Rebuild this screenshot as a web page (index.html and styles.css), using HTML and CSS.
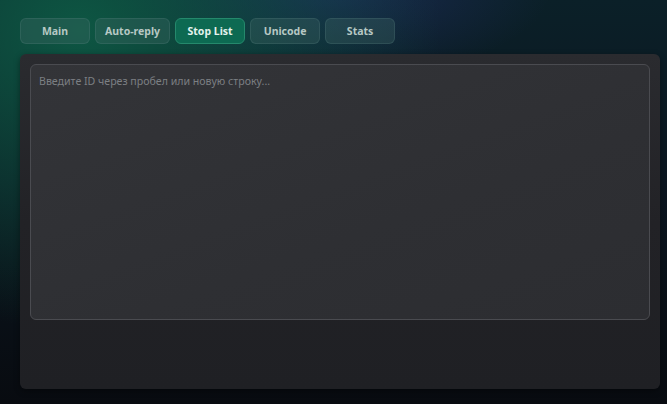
FILE: index.html
```html
<!doctype html>
<html lang="ru">
<head>
	<meta charset="UTF-8">
	<title>Stop List</title>
	<link rel="stylesheet" href="styles.css">
</head>
<body>
	<div class="app">
		<div class="tabs">
			<a href="javascript:;" class="tab">Main</a>
			<a href="javascript:;" class="tab">Auto-reply</a>
			<a href="javascript:;" class="tab active">Stop List</a>
			<a href="javascript:;" class="tab">Unicode</a>
			<a href="javascript:;" class="tab">Stats</a>
		</div>
		<div class="panel">
			<textarea class="ids" placeholder="Введите ID через пробел или новую строку..."></textarea>
		</div>
	</div>
</body>
</html>
```

FILE: styles.css
```css
html, body {
	height: 100%;
}
body {
	margin: 0;
	padding: 0;
	font: 10.5px/1.4 "Noto Sans", "Open Sans", sans-serif;
	color: #c9d4d1;
	background:
		radial-gradient(ellipse 360px 300px at 80px 30px, rgba(14, 96, 72, .85), transparent),
		radial-gradient(ellipse 220px 90px at 330px -10px, rgba(40, 50, 120, .5), transparent),
		linear-gradient(180deg, #0b2028 0%, #0b1620 45%, #080b10 100%);
	overflow: hidden;
}
.app {
	padding: 18px 8px 0 20px;
}
/* 顶部标签 */
.tabs {
	display: flex;
	gap: 5px;
}
.tab {
	display: inline-block;
	box-sizing: border-box;
	min-width: 70px;
	height: 26px;
	line-height: 24px;
	padding: 0 9px;
	text-align: center;
	font-weight: 700;
	color: #b7c8c4;
	text-decoration: none;
	background: rgba(70, 110, 105, .3);
	border: 1px solid rgba(100, 140, 135, .22);
	border-radius: 6px;
}
.tab.active {
	color: #e4f3ed;
	background: #0d6a52;
	border-color: #25896c;
}
/* 面板 */
.panel {
	margin-top: 10px;
	box-sizing: border-box;
	width: 640px;
	height: 335px;
	padding: 10px;
	background: linear-gradient(180deg, #2a2b2f 0%, #222226 50%, #1f2024 100%);
	border-radius: 6px;
	box-shadow: 0 2px 6px rgba(0, 0, 0, .4);
}
.ids {
	display: block;
	box-sizing: border-box;
	width: 100%;
	height: 256px;
	padding: 9px 8px;
	resize: none;
	font: 10.6px/1.4 "Noto Sans", "Open Sans", sans-serif;
	color: #d0d3d6;
	background: linear-gradient(160deg, #333438 0%, #2e2f33 60%, #2c2d31 100%);
	border: 1px solid #4a4b50;
	border-radius: 6px;
	outline: none;
}
.ids::placeholder {
	color: #7c7f83;
}
```
